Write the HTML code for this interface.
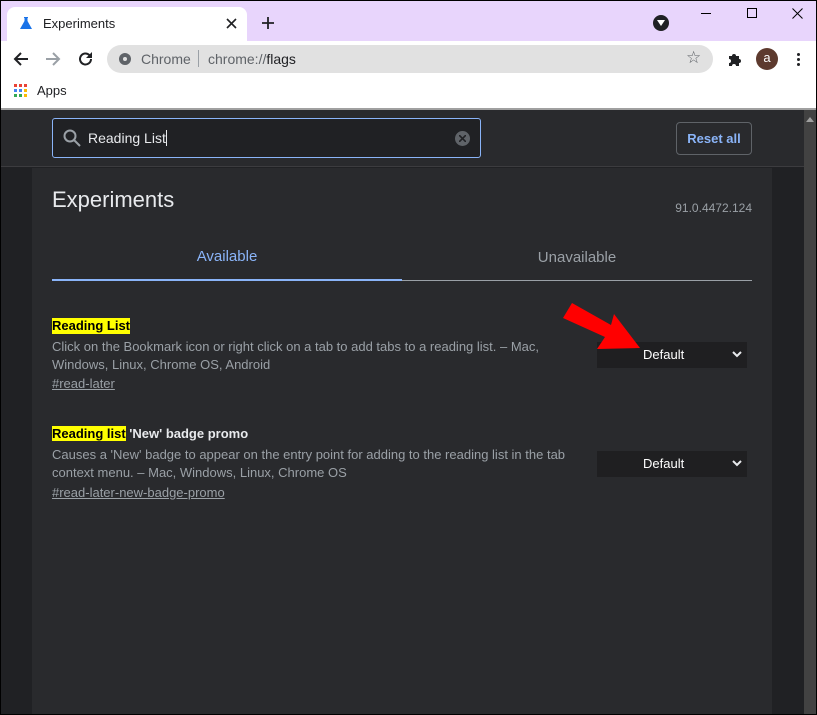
<!DOCTYPE html>
<html><head><meta charset="utf-8"><style>
*{margin:0;padding:0;box-sizing:border-box}
body{width:817px;height:715px;overflow:hidden;background:#000;font-family:"Liberation Sans",Arial,sans-serif;position:relative}
.a{position:absolute}
.t{white-space:nowrap}
</style></head><body>
<div class="a" style="left:1px;top:1px;width:815px;height:40px;background:#e8d5fc"></div>
<div class="a" style="left:7px;top:7px;width:240px;height:34px;background:#fff;border-radius:8px 8px 0 0"></div>
<svg class="a" style="left:19px;top:16px" width="14" height="14" viewBox="0 0 14 14"><path d="M5 1h4v1H8.5v3l4.5 8H1l4.5-8V2H5z" fill="#1a73e8"/></svg>
<div class="a t" style="left:43px;top:16px;font-size:13px;color:#202124">Experiments</div>
<svg class="a" style="left:226px;top:18px" width="11" height="11"><path d="M1 1l9 9M10 1l-9 9" stroke="#202124" stroke-width="1.6"/></svg>
<svg class="a" style="left:261px;top:16px" width="14" height="14"><path d="M7 1v12M1 7h12" stroke="#202124" stroke-width="1.8"/></svg>
<div class="a" style="left:653px;top:15px;width:16px;height:16px;border-radius:50%;background:#202124"></div>
<svg class="a" style="left:656px;top:19px" width="10" height="8"><path d="M1 1h8L5 7z" fill="#fff"/></svg>
<div class="a" style="left:701px;top:13px;width:10px;height:1px;background:#000"></div>
<div class="a" style="left:747px;top:8px;width:10px;height:10px;border:1px solid #000"></div>
<svg class="a" style="left:792px;top:8px" width="11" height="11"><path d="M0.5 0.5l10 10M10.5 0.5l-10 10" stroke="#000" stroke-width="1"/></svg>
<div class="a" style="left:1px;top:41px;width:815px;height:68px;background:#fff"></div>
<svg class="a" style="left:13px;top:51px" width="16" height="16"><path d="M15 8H2M8 2L2 8l6 6" stroke="#202124" stroke-width="2" fill="none"/></svg>
<svg class="a" style="left:45px;top:51px" width="16" height="16"><path d="M1 8h13M8 2l6 6-6 6" stroke="#9aa0a6" stroke-width="2" fill="none"/></svg>
<svg class="a" style="left:78px;top:51px" width="16" height="16"><path d="M13 8a5.5 5.5 0 1 1-1.6-3.9" stroke="#202124" stroke-width="2" fill="none"/><path d="M14 1v6H8z" fill="#202124"/></svg>
<div class="a" style="left:107px;top:45px;width:606px;height:28px;background:#e1e1e1;border-radius:14px"></div>
<div class="a" style="left:119px;top:53px;width:12px;height:12px;border-radius:50%;background:#5f6368"></div>
<div class="a" style="left:122px;top:56px;width:6px;height:6px;border-radius:50%;background:#e1e1e1;border:1.5px solid #5f6368"></div>
<div class="a t" style="left:141px;top:51px;font-size:14px;color:#5f6368">Chrome</div>
<div class="a" style="left:198px;top:50px;width:1px;height:17px;background:#9aa0a6"></div>
<div class="a t" style="left:208px;top:51px;font-size:14px;color:#5f6368">chrome://<span style="color:#202124">flags</span></div>
<div class="a t" style="left:686px;top:48px;font-size:17px;color:#5f6368">☆</div>
<svg class="a" style="left:727px;top:51px" width="16" height="16" viewBox="0 0 16 16"><path d="M2 5h3a2 2 0 1 1 4 0h3v3a2 2 0 1 1 0 4v3H9a2 2 0 1 0-4 0H2v-3a2 2 0 1 0 0-4z" fill="#202124"/></svg>
<div class="a" style="left:756px;top:48px;width:22px;height:22px;border-radius:50%;background:#5d3a2e;color:#fff;font-size:13px;text-align:center;line-height:20px">a</div>
<div class="a" style="left:797px;top:53px;width:3px;height:3px;border-radius:50%;background:#202124;box-shadow:0 5px 0 #202124,0 10px 0 #202124"></div>
<svg class="a" style="left:14px;top:84px" width="14" height="14"><g><rect x="0" y="0" width="3" height="3" fill="#ea4335"/><rect x="5" y="0" width="3" height="3" fill="#ea4335"/><rect x="10" y="0" width="3" height="3" fill="#ea4335"/><rect x="0" y="5" width="3" height="3" fill="#4285f4"/><rect x="5" y="5" width="3" height="3" fill="#4285f4"/><rect x="10" y="5" width="3" height="3" fill="#fbbc04"/><rect x="0" y="10" width="3" height="3" fill="#34a853"/><rect x="5" y="10" width="3" height="3" fill="#34a853"/><rect x="10" y="10" width="3" height="3" fill="#fbbc04"/></g></svg>
<div class="a t" style="left:37px;top:83px;font-size:13px;color:#202124">Apps</div>
<div class="a" style="left:1px;top:108px;width:815px;height:2px;background:#a0a0a0"></div>
<div class="a" style="left:1px;top:110px;width:803px;height:604px;background:#202124"></div>
<div class="a" style="left:1px;top:110px;width:803px;height:57px;background:#292a2d;border-bottom:1px solid #3c3c3f"></div>
<div class="a" style="left:804px;top:110px;width:12px;height:604px;background:#424242"></div>
<svg class="a" style="left:806px;top:117px" width="8" height="5"><path d="M0 5l4-5 4 5z" fill="#a0a0a0"/></svg>
<div class="a" style="left:52px;top:118px;width:429px;height:40px;background:#202124;border:1px solid #8ab4f8;border-radius:3px"></div>
<svg class="a" style="left:63px;top:129px" width="18" height="18"><circle cx="7" cy="7" r="5.5" stroke="#9aa0a6" stroke-width="2" fill="none"/><path d="M11 11l6 6" stroke="#9aa0a6" stroke-width="2"/></svg>
<div class="a t" style="left:88px;top:130px;font-size:14px;color:#e8eaed">Reading List<span style="display:inline-block;width:1px;height:16px;background:#e8eaed;vertical-align:-3px"></span></div>
<div class="a" style="left:455px;top:131px;width:15px;height:15px;border-radius:50%;background:#5f6368"></div>
<svg class="a" style="left:459px;top:135px" width="7" height="7"><path d="M0 0l7 7M7 0l-7 7" stroke="#202124" stroke-width="1.6"/></svg>
<div class="a t" style="left:676px;top:122px;width:76px;height:33px;border:1px solid #5f6368;border-radius:4px;color:#8ab4f8;font-size:13px;font-weight:bold;text-align:center;line-height:31px">Reset all</div>
<div class="a" style="left:32px;top:168px;width:740px;height:546px;background:#292a2d"></div>
<div class="a t" style="left:52px;top:187px;font-size:22px;color:#e8eaed">Experiments</div>
<div class="a t" style="left:652px;top:201px;width:100px;text-align:right;font-size:12px;color:#9aa0a6">91.0.4472.124</div>
<div class="a t" style="left:52px;top:248px;width:350px;text-align:center;font-size:15px;color:#8ab4f8">Available</div>
<div class="a t" style="left:402px;top:249px;width:350px;text-align:center;font-size:15px;color:#9aa0a6">Unavailable</div>
<div class="a" style="left:52px;top:279px;width:350px;height:2px;background:#8ab4f8"></div>
<div class="a" style="left:402px;top:280px;width:350px;height:1px;background:#9aa0a6"></div>
<div class="a t" style="left:52px;top:318px;font-size:13px;font-weight:bold;color:#000;background:#ffff00;line-height:16px">Reading List</div>
<div class="a" style="left:52px;top:338px;width:510px;font-size:13px;color:#9aa0a6;line-height:18px">Click on the Bookmark icon or right click on a tab to add tabs to a reading list. – Mac, Windows, Linux, Chrome OS, Android</div>
<div class="a t" style="left:52px;top:376px;font-size:13px;color:#9aa0a6;text-decoration:underline">#read-later</div>
<div class="a t" style="left:597px;top:342px;width:150px;height:26px;background:#1f1f21;color:#fff;font-size:13px;line-height:26px;padding-left:46px">Default<svg style="position:absolute;right:5px;top:9px" width="10" height="7"><path d="M1 1l4 4 4-4" stroke="#e8eaed" stroke-width="2" fill="none"/></svg></div>
<div class="a t" style="left:52px;top:426px;font-size:13px;font-weight:bold;color:#e8eaed;line-height:16px"><span style="background:#ffff00;color:#000">Reading list</span> 'New' badge promo</div>
<div class="a" style="left:52px;top:446px;width:530px;font-size:13px;color:#9aa0a6;line-height:18px">Causes a 'New' badge to appear on the entry point for adding to the reading list in the tab context menu. – Mac, Windows, Linux, Chrome OS</div>
<div class="a t" style="left:52px;top:485px;font-size:13px;color:#9aa0a6;text-decoration:underline">#read-later-new-badge-promo</div>
<div class="a t" style="left:597px;top:451px;width:150px;height:26px;background:#1f1f21;color:#fff;font-size:13px;line-height:26px;padding-left:46px">Default<svg style="position:absolute;right:5px;top:9px" width="10" height="7"><path d="M1 1l4 4 4-4" stroke="#e8eaed" stroke-width="2" fill="none"/></svg></div>
<svg class="a" style="left:0;top:0" width="817" height="715"><polygon points="563,318 572,303 611,325 614,314 640,348 597,349 605,337" fill="#ff0000"/></svg>
</body></html>
